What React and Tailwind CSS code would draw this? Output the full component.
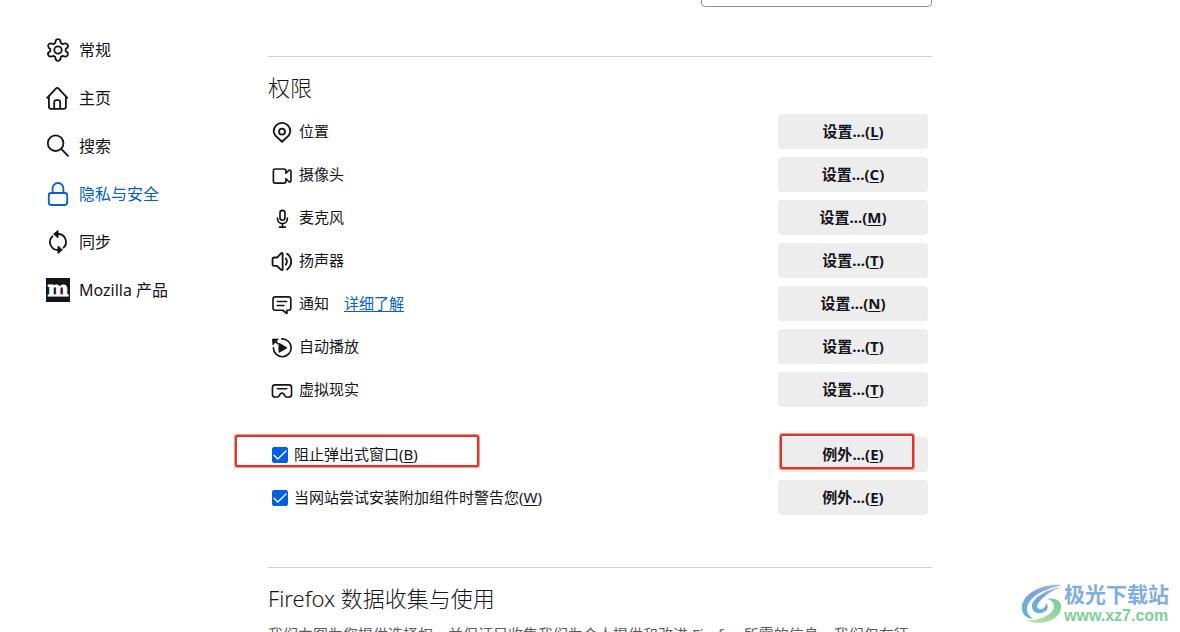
import React from "react";

const Icon = ({ size = 24, width = 1.8, children }) => (
  <svg
    className="shrink-0"
    width={size}
    height={size}
    viewBox="0 0 24 24"
    fill="none"
    stroke="currentColor"
    strokeWidth={width}
    strokeLinecap="round"
    strokeLinejoin="round"
    aria-hidden="true"
  >
    {children}
  </svg>
);

const GearIcon = () => (
  <Icon>
    <path d="M9.6 3.2Q10 1.2 12 1.2T14.4 3.2L14.9 5.1L16.7 6.1L18.6 5.5Q20.5 5 21.6 6.8T21.2 9.7L19.7 11V13L21.2 14.3Q22.6 15.5 21.6 17.2T18.6 18.5L16.7 17.9L14.9 18.9L14.4 20.8Q14 22.8 12 22.8T9.6 20.8L9.1 18.9L7.3 17.9L5.4 18.5Q3.5 19 2.4 17.2T2.8 14.3L4.3 13V11L2.8 9.7Q1.4 8.5 2.4 6.8T5.4 5.5L7.3 6.1L9.1 5.1Z" />
    <circle cx="12" cy="12" r="3.7" />
  </Icon>
);

const HomeIcon = () => (
  <Icon>
    <path d="M1.2 11.8L9.8 2.6Q11.2 1.2 12.6 2.6L21.2 11.8" />
    <path d="M2.9 10.5V20.5Q2.9 22.9 5.3 22.9H17.5Q19.9 22.9 19.9 20.5V10.5" />
    <path d="M8.2 22.5V16.4Q8.2 14.2 10.4 14.2H12Q14.2 14.2 14.2 16.4V22.5" />
  </Icon>
);

const SearchIcon = () => (
  <Icon>
    <circle cx="9.6" cy="9.2" r="7.8" />
    <path d="M15.2 14.8L22 21.8" />
  </Icon>
);

const LockIcon = () => (
  <Icon>
    <rect x="2.8" y="11" width="18.4" height="12" rx="2.4" />
    <path d="M6.6 10.8V6.4A5.4 5.4 0 0 1 17.4 6.4V10.8" />
  </Icon>
);

const SyncIcon = () => (
  <Icon>
    <path d="M12 4A8 8 0 0 1 17.6 17.7" />
    <path d="M12 20A8 8 0 0 1 6.4 6.3" />
    <path d="M7.8 4L12 .6V7.4Z" fill="currentColor" strokeWidth="1" />
    <path d="M16.2 20L12 23.4V16.6Z" fill="currentColor" strokeWidth="1" />
  </Icon>
);

const MozillaIcon = () => (
  <svg className="shrink-0" width="24" height="24" viewBox="0 0 24 24" aria-hidden="true">
    <rect width="24" height="24" fill="#15141a" />
    <text
      x="12"
      y="18"
      fill="#fff"
      stroke="#fff"
      strokeWidth="0.8"
      fontSize="20"
      fontWeight="700"
      textAnchor="middle"
      fontFamily="DejaVu Serif, serif"
    >
      m
    </text>
  </svg>
);

const LocationIcon = () => (
  <Icon size={22} width={2}>
    <path d="M12 22.6L4.8 15.9A9.3 9.3 0 0 1 2.9 11.2A9.1 9.1 0 0 1 21.1 11.2A9.3 9.3 0 0 1 19.2 15.9Z" />
    <circle cx="12" cy="11.6" r="3.2" />
  </Icon>
);

const CameraIcon = () => (
  <Icon size={22}>
    <path d="M16.3 9.6V7.6Q16.3 5.4 14.1 5.4H4.8Q2.6 5.4 2.6 7.6V18.6Q2.6 20.8 4.8 20.8H14.1Q16.3 20.8 16.3 18.6V16.6" />
    <path d="M16.3 10L19.3 7.1Q21.8 5.6 21.8 8.4V17.8Q21.8 20.6 19.3 19.1L16.3 16.2" />
  </Icon>
);

const MicrophoneIcon = () => (
  <Icon size={22}>
    <rect x="9.8" y="3.6" width="5.4" height="10.8" rx="2.7" />
    <path d="M7.1 12V12.8A5.4 5.4 0 0 0 17.9 12.8V12M12.5 18.4V21.8M9.3 22H15.7" />
  </Icon>
);

const SpeakerIcon = () => (
  <Icon size={22} width={2}>
    <path d="M12.7 4.6V20.8Q12.7 22.6 11 21.6L6.6 17.4H3.4Q1.7 17.4 1.7 15.7V10.1Q1.7 8.2 3.4 8.2H6.6L11 3.6Q12.7 2.6 12.7 4.6Z" />
    <path d="M16.2 9.2Q18.5 12.6 16.2 16.2M17.6 4.2Q22 7.4 22 12.6T17.6 21.2" />
  </Icon>
);

const NotificationIcon = () => (
  <Icon size={22}>
    <path d="M4.6 4.2H19.2Q21.6 4.2 21.6 6.6V16.4Q21.6 18.8 19.2 18.8H17.4V22.4L12.6 18.8H4.6Q2.2 18.8 2.2 16.4V6.6Q2.2 4.2 4.6 4.2Z" />
    <path d="M6.9 9.3H17M6.9 13.6H14" />
  </Icon>
);

const AutoplayIcon = () => (
  <Icon size={22}>
    <path d="M11.8 3.2A9.7 9.7 0 1 1 2.6 12.9" />
    <path d="M2 3.4H8L2.4 9.4Z" fill="currentColor" strokeWidth="1" />
    <path d="M5 6L7.4 8.4" />
    <path d="M9 8.4V17.4L16.8 12.9Z" fill="currentColor" strokeWidth="1.6" />
  </Icon>
);

const HeadsetIcon = () => (
  <Icon size={22}>
    <path d="M4.4 6.4H19.6Q22.4 6.4 22.4 9.2V16.8Q22.4 19.6 19.6 19.6H17.2Q15.9 19.6 15.2 18.5L14 16.4Q12 14.2 10 16.4L8.8 18.5Q8.1 19.6 6.8 19.6H4.4Q1.6 19.6 1.6 16.8V9.2Q1.6 6.4 4.4 6.4Z" />
    <path d="M7 10.6H17" />
  </Icon>
);

const categories = [
  { label: "常规", icon: GearIcon },
  { label: "主页", icon: HomeIcon },
  { label: "搜索", icon: SearchIcon },
  { label: "隐私与安全", icon: LockIcon, active: true },
  { label: "同步", icon: SyncIcon },
  { label: "Mozilla 产品", icon: MozillaIcon },
];

const permissions = [
  { label: "位置", accessKey: "L", icon: LocationIcon },
  { label: "摄像头", accessKey: "C", icon: CameraIcon },
  { label: "麦克风", accessKey: "M", icon: MicrophoneIcon },
  { label: "扬声器", accessKey: "T", icon: SpeakerIcon },
  { label: "通知", accessKey: "N", icon: NotificationIcon, link: "详细了解" },
  { label: "自动播放", accessKey: "T", icon: AutoplayIcon },
  { label: "虚拟现实", accessKey: "T", icon: HeadsetIcon },
];

const AccessKey = ({ children }) => (
  <>
    (<span className="underline underline-offset-2">{children}</span>)
  </>
);

const ActionButton = ({ label, accessKey }) => (
  <button
    type="button"
    className="w-[150px] h-[35px] shrink-0 rounded bg-[#ededed] text-[15px] font-bold hover:bg-[#e0e0e6]"
  >
    {label}...
    <AccessKey>{accessKey}</AccessKey>
  </button>
);

const CheckRow = ({ id, label, accessKey, highlighted }) => (
  <div className="relative flex items-center justify-between pl-1 pr-1">
    <div className="flex items-center gap-[6px]">
      <span className="grid">
        <input
          id={id}
          type="checkbox"
          defaultChecked
          className="peer col-start-1 row-start-1 size-4 appearance-none rounded-xs border border-[#8f8f9d] checked:border-[#0061e0] checked:bg-[#0061e0]"
        />
        <svg
          className="pointer-events-none invisible col-start-1 row-start-1 size-4 peer-checked:visible"
          viewBox="0 0 16 16"
          fill="none"
          stroke="#fff"
          strokeWidth="1.3"
          strokeLinecap="round"
          strokeLinejoin="round"
        >
          <path d="M2 8.2L5.8 12L14 4" />
        </svg>
      </span>
      <label htmlFor={id}>
        {label}
        <AccessKey>{accessKey}</AccessKey>
      </label>
    </div>
    <ActionButton label="例外" accessKey="E" />
    {highlighted && (
      <>
        <div className="pointer-events-none absolute -left-[33px] -top-[2px] h-[32px] w-[244px] rounded-xs border-2 border-[#e0332c] ring-1 ring-[#e0332c]/50"></div>
        <div className="pointer-events-none absolute right-[18px] -top-[3px] h-[35px] w-[134px] rounded-xs border-2 border-[#e0332c] ring-1 ring-[#e0332c]/50"></div>
      </>
    )}
  </div>
);

const Watermark = () => (
  <div className="pointer-events-none absolute bottom-[6px] right-[11px] flex items-center gap-px">
    <svg width="42" height="42" viewBox="0 0 42 42" aria-hidden="true">
      <defs>
        <linearGradient id="swirl" x1="1" y1="0" x2="0" y2="1">
          <stop offset="0" stopColor="#9dbce8" />
          <stop offset="0.5" stopColor="#78a4e0" />
          <stop offset="1" stopColor="#62b4dc" />
        </linearGradient>
        <linearGradient id="leaf" x1="0" y1="1" x2="1" y2="0">
          <stop offset="0" stopColor="#c0e89c" />
          <stop offset="1" stopColor="#70cba0" />
        </linearGradient>
      </defs>
      <path d="M41 2C24 0 3 9 1 23C0 31 5 35 12 36C5 31 4 25 9 18C15 10 26 6 41 2Z" fill="url(#swirl)" />
      <path d="M40 4C25 7 11 15 11 23C11 29 17 32 23 29C27 27 28 23 25 20C25 24 22 27 18 26C14 24 17 19 22 15C27 10 33 7 40 4Z" fill="url(#swirl)" />
      <path d="M26 16C35 18 35 27 27 32C21 36 13 38 5 37C17 43 34 39 39 29C43 20 36 14 26 16Z" fill="url(#leaf)" />
    </svg>
    <div className="whitespace-nowrap">
      <div className="text-[21px] leading-6 font-bold text-[#80aee3]">极光下载站</div>
      <div className="font-['Liberation_Sans',sans-serif] text-base leading-5 font-bold text-[#7ed09a]">
        www.xz7.com
      </div>
    </div>
  </div>
);

const App = () => {
  return (
    <div className="relative flex h-screen overflow-hidden bg-white font-['Noto_Sans','Noto_Sans_CJK_SC',sans-serif] text-[15px] text-[#15141a]">
      <nav className="w-[268px] shrink-0 pl-[46px] pt-[26px]">
        {categories.map(({ label, icon: CategoryIcon, active }) => (
          <a
            key={label}
            href="#"
            className={`flex h-12 items-center gap-[9px] text-base ${active ? "text-[#0560c8]" : ""}`}
          >
            <CategoryIcon />
            {label}
          </a>
        ))}
      </nav>

      <main className="w-full max-w-[664px]">
        <div className="-mt-6 flex justify-end">
          <select
            aria-label="历史记录"
            className="h-[31px] w-[231px] appearance-none rounded border border-[#8f8f9d] bg-white"
          ></select>
        </div>

        <section className="mt-[49px] border-t border-[#d0d0d0] pt-[14px]">
          <h2 className="mb-[11px] text-[22px] leading-8 font-light">权限</h2>
          <div className="flex flex-col gap-2">
            {permissions.map(({ label, accessKey, icon: PermissionIcon, link }) => (
              <div key={label} className="flex items-center justify-between pl-[3px] pr-1">
                <div className="flex items-center">
                  <PermissionIcon />
                  <span className="ml-[6px]">{label}</span>
                  {link && (
                    <a href="#" className="ml-[15px] text-[#0560c8] underline underline-offset-2">
                      {link}
                    </a>
                  )}
                </div>
                <ActionButton label="设置" accessKey={accessKey} />
              </div>
            ))}
          </div>
          <div className="mt-[30px] flex flex-col gap-2">
            <CheckRow id="popups" label="阻止弹出式窗口" accessKey="B" highlighted />
            <CheckRow id="addons" label="当网站尝试安装附加组件时警告您" accessKey="W" />
          </div>
        </section>

        <section className="mt-[52px] border-t border-[#d0d0d0] pt-[14px]">
          <h2 className="mb-[9px] text-[22px] leading-8 font-light">Firefox 数据收集与使用</h2>
          <p className="text-[#5b5b66]">
            我们力图为您提供选择权，并保证只收集我们为众人提供和改进 Firefox 所需的信息。我们仅在征
          </p>
        </section>
      </main>

      <Watermark />
    </div>
  );
};

export default App;
